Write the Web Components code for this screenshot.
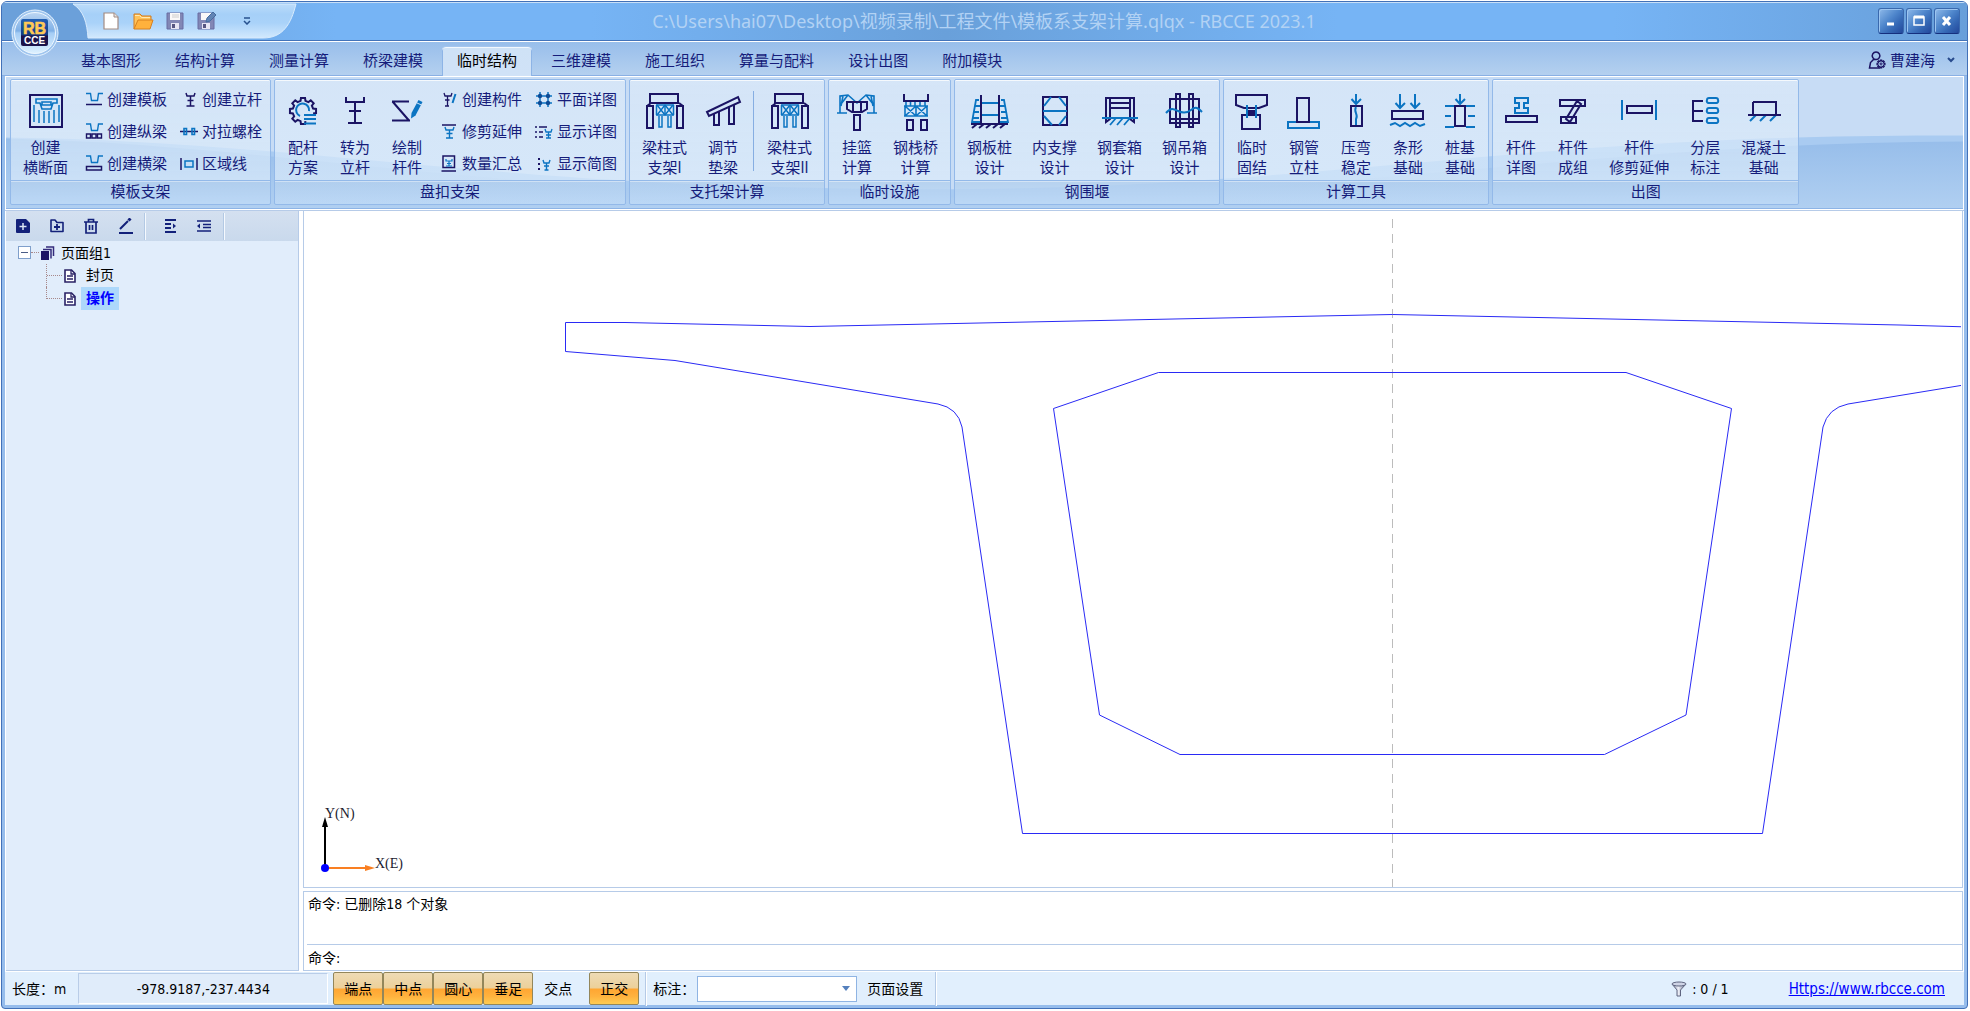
<!DOCTYPE html>
<html lang="zh-CN">
<head>
<meta charset="utf-8">
<title>RBCCE 2023.1</title>
<style>
html,body{margin:0;height:100%;background:#fff}
body{font-family:"DejaVu Sans Condensed","Noto Sans","Noto Sans CJK SC",sans-serif;font-size:14px;color:#000;overflow:hidden}
</style>
</head>
<body>
<rb-window></rb-window>
<script>
const D='#1b1464',B='#0b74c2';
function gear(cx,cy,ro,ri,n,from,to,close){
  const pts=[],step=360/n;
  for(let i=0;i<n;i++){
    for(const [o,r] of [[-.30,ri],[-.20,ro],[.20,ro],[.30,ri]]){
      const a=from+(i+o)*step;
      if(a>to)continue;
      const t=a*Math.PI/180;
      pts.push((cx+r*Math.cos(t)).toFixed(2)+' '+(cy+r*Math.sin(t)).toFixed(2));
    }
  }
  return 'M'+pts.join('L')+(close?'z':'');
}
const d=(p,w=2)=>`<path d="${p}" fill="none" stroke="${D}" stroke-width="${w}"/>`;
const b=(p,w=2)=>`<path d="${p}" fill="none" stroke="${B}" stroke-width="${w}"/>`;
const U='M1 2.5h4.5l1 7h6l1-7H18';
const pier=d('M5 3h28v9H5zM2 15h6v22H2zM32 15h6v22h-6zM2 15l4-3M38 15l-4-3')+b('M11 14h18M11 24h18M11.500 14v10M20 14v10M28.500 14v10',1.5)+b('M12 14l8 10M20 14l-8 10M20 14l8 10M28 14l-8 10M14 25v11h3V25M23 25v11h3V25',1.5);
const ICON={
 section:[40,d('M4 4h32v32H4z')+b('M10 8h21v4h-4l-2 6H16l-2-6h-4zM16 11h9v3h-9z',1.6)+b('M8 14v17M13 19v13M18 20v12M23 20v12M28 19v13M33 14v17',1.5)],
 gear:[40,d(gear(20,20,13.2,10.4,8,90,385),2)+b('M17 25a6.500 6.500 0 1 1 9-5')+b('M21 24h12M21 28h12M21 32.500h12')],
 pole:[40,d('M11 6v5h18V6M20 11v21M14 20h12M13 32h14')],
 draw:[40,d('M5 10.500h17M5.500 10.500L22 29.500M5 29.500h18')+`<path d="M31.500 9l4 2-7 13.500-4.500 3 .5-5.500z" fill="${B}"/><path d="M30 12l4.500 2" stroke="#cfe2f7" stroke-width="1"/>`],
 pier:[40,pier],
 pad:[40,d('M4 21L35 6l2 5L6 25zM11 23v11h5V21M26 15v18h5V13')],
 basket:[40,b('M3 22V5l8-1 9 8 9-8 8 1v17M11 4L4 13M29 4l7 9M20 12L11 4M0 22h10M30 22h10M6 5l-2 10M34 5l2 10',1.6)+d('M10 11h20v7l-5 3H15l-5-3zM16 11v9M24 11v9')+d('M17 24h6v15h-6z')],
 trestle:[40,d('M8 3v7h24V3M11 29h6v10h-6zM25 29h6v10h-6z')+b('M8 15h24M8 25h24M9 15v10M20 15v10M31 15v10M9 15l11 10M20 15L9 25M20 15l11 10M31 15L20 25M10 11v4M14.500 11v4M19 11v4M24 11v4M29 11v4',1.6)],
 sheet:[40,b('M10 12h20M10 24h20M9 9H6L2 31h8M31 9h3l4 22h-8M5 15h5M4 21h5M3 27h6M30 15h5M31 21h5M31 27h6',1.8)+d('M11 4v29M29 4v29M1 33h37M7 33l-5 4M14 33l-5 4M21 33l-5 4M28 33l-5 4M35 33l-5 4',2)],
 brace:[40,d('M8 6h24v28H8z')+b('M8 20h24M16 6L9 15M24 6l7 9M9 25l8 9M31 25l-7 9')],
 jacket:[40,d('M6 7h28M10 12h20',2)+d('M6 6v25l4-3V7M34 6v25l-4-3V7M10 17h20M10 7v10M30 7v10',2)+b('M2 27h36M16 27l-6 7M23 27l-6 7M30 27l-6 7',1.8)],
 hoist:[40,d('M5 8h29v24H5zM11 3h4v33h-4zM24 3h4v33h-4zM5 28h29',2)+b('M1 22c5-6 8-4 12-2s8 3 13-1 7-2 11 2')],
 fix:[40,d('M4 4h31v10l-8 3H12l-8-3zM10 24h18v14H10zM14 20h10')+b('M15 14v13M24 14v13')+`<path d="M16 20h7v4h-7z" fill="${D}"/>`],
 tube:[40,b('M4 31h31v6H4z')+d('M13 7h12v24H13z')],
 bend:[40,d('M15 15h11v20H15z')+b('M20 3v10M15.500 8l4.500 5 5-5M20 16c-3 5 3 8 0 12v6')],
 strip:[40,d('M4 20h31v8H4z')+b('M12 3v14M7.500 12l4.500 5 5-5M27 3v14M22.500 12l4.500 5 5-5M2 34l5-2 5 3 5-3 5 3 5-3 5 3 5-2')],
 pile:[40,d('M15 15h10v20H15z')+b('M20 3v10M15.500 8l4.500 5 5-5M5 15h9M26 15h9M5 25h6M28 25h7M5 36h9M26 36h9')],
 detail:[40,b('M14 7h13v5h-4v5h4v5H14v-5h4v-5h-4z')+d('M5 25h31v6H5z')],
 bundle:[40,d('M7 9h25v6H7zM8 26h15v6H8zM24 10l4 3-11 18-4-3z')],
 trim:[40,b('M3 9v20M37 9v20')+d('M8 15h25v7H8z')],
 layer:[40,d('M18 10H8v20h10M8 20h10')+b('M24 7h7a2 2 0 0 1 2 2 2 2 0 0 1-2 3h-7a2 2 0 0 1-2-3 2 2 0 0 1 2-2zM24 17h7a2 2 0 0 1 2 2 2 2 0 0 1-2 3h-7a2 2 0 0 1-2-3 2 2 0 0 1 2-2zM24 27h7a2 2 0 0 1 2 2 2 2 0 0 1-2 3h-7a2 2 0 0 1-2-3 2 2 0 0 1 2-2z')],
 base:[40,b('M12 24l-6 6M22 24l-6 6M32 24l-6 6')+d('M9 11h23v13M9 11v13M4 24h33')],
 mTpl:[18,b(U,1.4)+d('M1 13.500h16',1.5)],
 mLong:[18,b('M1 1h4.500l1 6.500h6l1-6.500H18',1.4)+d('M1.500 11h4v4h-4zM7 11h4v4H7zM12.500 11h4v4h-4z',1.4)],
 mCross:[18,b('M1 1h4.500l1 6.500h6l1-6.500H18',1.4)+d('M1.500 11.500h15v3.500h-15z',1.5)],
 mPole:[18,d('M6 2l1 3h7l1-3M10.500 5v10M7.500 9.500h6M6.500 15h8',1.5)],
 mBolt:[18,d('M0 8.500h18',1.4)+b('M4 5.500h2.500v6H4zM12 5.500h2.500v6H12z',1.6)],
 mArea:[18,d('M1 3v12M17 3v12',1.5)+b('M5 6h8v6H5z',1.5)],
 mPart:[18,d('M4 2l1 3h6l1-3M7.500 5v10M5 9h4.500M5 15h4',1.3)+b('M15.500 3l-3 9',2)],
 mTrim:[18,d('M2 2h14',1.5)+b('M5 4l1 3h7l1-3M9.500 7v8M6.500 10.500h6M6 15h7',1.4)],
 mSum:[18,d('M3 1h11.500v11.500H3zM1.500 16h14.500',1.5)+b('M6 4v2h6V4M9 6v5M7 8.500h4M6 11h6',1.2)],
 mPlan:[18,b('M5 1v15M13 1v15M1 5h16M1 12h16',1.5)+[[5,5],[13,5],[5,12],[13,12]].map(p=>`<circle cx="${p[0]}" cy="${p[1]}" r="2.200" fill="#0d4a94"/>`).join('')],
 mShowD:[18,d('M0 4h2M0 9h2M0 14h2M4 4h8M4 9h4M4 14h4',1.6)+b('M10 6l1 3h5l1-3M13.500 9v6M11 12h5M11 15h5',1.3)],
 mShowS:[18,d('M3 4h2M3 9h2M3 14h2',1.8)+b('M8 5l1 3h5l1-3M11.500 8v7M9 11h5M9.500 15h4',1.4)],
 user:[18,d('M12 17H1.500l1-5.500 3-3h3M8 1a3.800 3.800 0 1 0 .1 0z',1.5)+d(gear(13,13,4,3,8,0,360,1),1.2)+d('M13 12a1 1 0 1 0 .1 0z',1)],
 newdoc:[20,'<path d="M3 2h10l4 4v12H3z" fill="#fff" stroke="#a38b82" stroke-width="1.2"/><path d="M13 2v4h4" fill="#e5e5e5" stroke="#a38b82"/>'],
 open:[22,'<path d="M2 19V4h6l2 2h9v4" fill="#ffc35a" stroke="#d27b1c"/><path d="M2 19l4-9h15l-3 9z" fill="#ffb13c" stroke="#d8801f"/><path d="M3 5.500h4.500l2 2H18" fill="none" stroke="#ffe9b4"/>'],
 save:[20,'<path d="M2 2h16v16H2z" fill="#8287b5" stroke="#686da2"/><path d="M5 2h10v7H5z" fill="#faf8f8"/><path d="M7 4h7M7 6h7" stroke="#ccc"/><path d="M6 12h8v6H6z" fill="#e6e5f4"/><path d="M7 13h3v4H7z" fill="#565581"/>'],
 savepen:[20,'<path d="M2 2h16v16H2z" fill="#8287b5" stroke="#686da2"/><path d="M5 2h10v7H5z" fill="#faf8f8"/><path d="M6 12h8v6H6z" fill="#e6e5f4"/><path d="M7 13h3v4H7z" fill="#565581"/><path d="M10 11l1-4 6-6 3 3-6 6z" fill="#6284b5" stroke="#456da0"/>'],
 more:[8,'<path d="M1 1h6" stroke="#27518e" stroke-width="1.5"/><path d="M1 4l3 3 3-3" fill="none" stroke="#27518e" stroke-width="1.5"/>'],
 caret:[8,'<path d="M1 2l3 3 3-3" fill="none" stroke="#274a8c" stroke-width="2"/>'],
 tAdd:[16,'<path d="M2 1h9l4 4v9a1 1 0 0 1-1 1H2a1 1 0 0 1-1-1V2a1 1 0 0 1 1-1z" fill="#13217a"/><path d="M8 5v7M4.500 8.500h7" stroke="#dbe6f4" stroke-width="1.5"/>'],
 tFolder:[16,'<path d="M2 2h4l2 2.500h6v9H2z" fill="none" stroke="#13217a" stroke-width="1.600" stroke-linejoin="round"/><path d="M8 6v6M5 9h6" stroke="#13217a" stroke-width="1.800"/>'],
 tDel:[16,'<path d="M1 4h14M5.500 4V1.500h5V4M3 4v11h10V4M6.500 7v5M9.500 7v5" fill="none" stroke="#13217a" stroke-width="1.700"/>'],
 tEdit:[16,'<path d="M2 15h14M3 11l8-8" fill="none" stroke="#13217a" stroke-width="2"/><path d="M11.500 2.500l2-2" stroke="#13217a" stroke-width="3"/>'],
 tIn:[16,'<path d="M3 2h11M3 6h6M3 10h6M3 14h11" stroke="#13217a" stroke-width="1.800"/><path d="M11 5.500l3 2.500-3 2.500z" fill="#13217a"/>'],
 tOut:[16,'<path d="M1 3h14M7 6.500h8M7 9.500h8M1 13h14" stroke="#13217a" stroke-width="1.600"/><path d="M4 5.500L1 8l3 2.500z" fill="#13217a"/>'],
 stack:[16,'<path d="M2 6h8v9H2z" fill="#1b1464"/><path d="M4 4.500h8v9M7 2h7.500v9" fill="none" stroke="#352c7c" stroke-width="1.500"/>'],
 page:[14,'<path d="M2 1h6.500L12 4.500V13H2z" fill="#fff" stroke="#2a2266" stroke-width="1.600"/><path d="M8 1v4h4M4 7h6M4 10h6" fill="none" stroke="#2a2266" stroke-width="1.300"/>'],
 funnel:[16,'<defs><linearGradient id="f"><stop stop-color="#7f86a3"/><stop offset=".45" stop-color="#eef0f8"/><stop offset="1" stop-color="#676e8e"/></linearGradient></defs><path d="M1 3l5 6v6h3.500V9L15 3z" fill="url(#f)" stroke="#5f6580"/><ellipse cx="8" cy="3" rx="7" ry="2" fill="#cfd4e6" stroke="#5f6580"/>'],
};
function define(name,css,html){
  customElements.define(name,class extends HTMLElement{
    connectedCallback(){
      if(this.shadowRoot)return;
      this.attachShadow({mode:'open'});
      this.shadowRoot.innerHTML='<style>*{box-sizing:border-box}button{font:inherit;color:inherit;background:none;border:0;padding:0;margin:0}'+css+'</style>'+(typeof html==='function'?html(this):html);
    }
  });
}
define('rb-icon',':host{display:block;flex:none}svg{display:block}',el=>{
  const [s,body]=ICON[el.getAttribute('name')];
  return `<svg width="${s}" height="${s}" viewBox="0 0 ${s} ${s}" aria-hidden="true">${body}</svg>`;
});
define('rb-tool',`:host{display:block}
button{display:flex;flex-direction:column;align-items:center;min-width:52px;padding:11px 10px 0;height:100px;line-height:20px;white-space:nowrap}
rb-icon{margin:0 -5px 7px}`,
el=>`<button><rb-icon name="${el.getAttribute('icon')}"></rb-icon>${el.getAttribute('label').split('|').map(t=>`<span>${t}</span>`).join('')}</button>`);
define('rb-mini',`:host{display:block}
button{display:flex;align-items:center;gap:4px;width:95px;height:32px;padding-left:6px;white-space:nowrap;line-height:20px}`,
el=>`<button><rb-icon name="${el.getAttribute('icon')}"></rb-icon><slot></slot></button>`);
define('rb-minis',':host{display:grid;grid-template-columns:95px 94px;grid-auto-rows:32px;padding-top:4px;margin-left:1px}','<slot></slot>');
define('rb-sep',':host{display:block;width:1px;height:80px;margin:11px 3px 0 4px;background:#86aee2}','');
define('rb-group',`:host{display:block;flex:none;border:1px solid #93b9e9;border-radius:2px;background:linear-gradient(rgba(222,235,249,.6),rgba(222,238,252,.65));box-shadow:inset 0 1px rgba(255,255,255,.75)}
.tools{display:flex;height:100px;padding:0 2px}
.title{height:24px;border-top:1px solid #93b9e9;box-shadow:inset 0 1px rgba(255,255,255,.4);line-height:22px;text-align:center;background:linear-gradient(rgba(140,180,226,.42),rgba(150,192,240,.32))}`,
el=>`<div class="tools"><slot></slot></div><div class="title">${el.getAttribute('label')}</div>`);
define('rb-quickbar',`:host{display:flex;align-items:center;position:relative;width:226px;height:36px;padding-left:29px}
svg.bg{position:absolute;inset:0;width:100%;height:100%}
.b{position:relative;display:flex}
.row{display:flex;align-items:center;gap:11px}
.m{margin-left:16px}`,
`<svg class="bg" viewBox="0 0 226 36" preserveAspectRatio="none"><defs><linearGradient id="q" x2="0" y2="1"><stop stop-color="#bcdcfa"/><stop offset=".3" stop-color="#a6d0f8"/><stop offset=".55" stop-color="#a9d2f9"/><stop offset="1" stop-color="#d2e9fd"/></linearGradient></defs><path d="M1 1h223c-5 20-13 34-33 34H16C15 20 12 8 1 1z" fill="url(#q)" stroke="#d9ebfc"/></svg>
<div class="row"><button class="b" aria-label="新建"><rb-icon name="newdoc"></rb-icon></button><button class="b" aria-label="打开"><rb-icon name="open"></rb-icon></button><button class="b" aria-label="保存"><rb-icon name="save"></rb-icon></button><button class="b" aria-label="另存为"><rb-icon name="savepen"></rb-icon></button><button class="b m" aria-label="更多"><rb-icon name="more"></rb-icon></button></div>`);
define('rb-winbtn',`:host{display:block}
button{display:flex;width:26px;height:26px;border-radius:3px;background:linear-gradient(135deg,#8fbaea,#4d85cb 45%,#3467b4 70%,#23489b);border:1px solid #3a69ae;border-bottom-color:#142f7e;box-shadow:inset 1px 1px #9cc5f0;align-items:center;justify-content:center}`,
el=>`<button aria-label="${el.getAttribute('kind')}"><svg width="14" height="14" viewBox="0 0 14 14" fill="none" stroke="#fff">${{min:'<path d="M3 10h7" stroke-width="3"/>',max:'<path d="M2 3h10v8H2z" stroke-width="1.500"/><path d="M2 3h10" stroke-width="3"/>',close:'<path d="M3 3l7 8M10 3L3 11" stroke-width="3"/>'}[el.getAttribute('kind')]}</svg></button>`);
define('rb-titlebar',`:host{display:flex;align-items:center;height:39px;background:linear-gradient(90deg,#6ba0da 0,#6ba0da 4%,#76b4f5 17%,#76b4f5 30%,#69a0da 48%,#76b4f5 68%,#76b4f5 82%,#689fda 100%);border-bottom:1px solid #4373b9;box-shadow:inset 0 1px #c8dff7}
rb-quickbar{margin-left:70px;flex:none}
h1{flex:1;margin:0;font:18px/38px "Noto Sans","Noto Sans CJK SC",sans-serif;color:#b2d2f4;text-align:center;white-space:nowrap}
.w{display:flex;gap:2px;padding-right:7px;margin-left:208px}`,
`<rb-quickbar></rb-quickbar><h1>C:\\Users\\hai07\\Desktop\\视频录制\\工程文件\\模板系支架计算.qlqx - RBCCE 2023.1</h1><div class="w"><rb-winbtn kind="min"></rb-winbtn><rb-winbtn kind="max"></rb-winbtn><rb-winbtn kind="close"></rb-winbtn></div>`);
define('rb-orb',`:host{position:absolute;left:9px;top:7px;display:block}button{display:block}svg{display:block}text{font-family:"Liberation Sans",sans-serif;font-weight:bold}`,
`<button aria-label="RBCCE"><svg width="48" height="48" viewBox="0 0 48 48"><defs><linearGradient id="o" x2="0" y2="1"><stop stop-color="#bcd6f3"/><stop offset=".45" stop-color="#7fb0e6"/><stop offset=".5" stop-color="#a5cdf5"/><stop offset="1" stop-color="#ddf1ff"/></linearGradient><linearGradient id="p" x2="0" y2="1"><stop stop-color="#2260b4"/><stop offset=".6" stop-color="#123a80"/><stop offset=".62" stop-color="#1b1249"/></linearGradient></defs><circle cx="24" cy="24" r="23" fill="#9fc5ee" stroke="#e4f1fd"/><circle cx="24" cy="24" r="20.500" fill="url(#o)" stroke="#eef7ff"/><rect x="10" y="10" width="27" height="27" rx="2" fill="url(#p)"/><text x="12" y="25" font-size="16" fill="#ffca55" stroke="#ffca55" stroke-width=".6">RB</text><text x="13" y="35" font-size="10" fill="#fff">CCE</text></svg></button>`);
const TABS=['基本图形','结构计算','测量计算','桥梁建模','临时结构','三维建模','施工组织','算量与配料','设计出图','附加模块'];
define('rb-tabs',`:host{display:flex;height:35px;padding:4px 12px 0 64px;background:linear-gradient(#98beeb,#b4d0ef);border-top:1px solid #fff;border-bottom:1px solid #8ab0e4;font-size:15px;color:#151c7a}
nav{display:flex;gap:4px}
.t{height:30px;padding:1px 15px 0;line-height:29px;white-space:nowrap}
.t[aria-selected=true]{color:#000;padding-top:0;box-shadow:inset 0 1px #f2f8fe,inset 1px 0 #8db4e6,inset -1px 0 #8db4e6;border-radius:4px 4px 0 0;background:linear-gradient(#cfe2f6,#d0e2f7);border-top:1px solid #a5c6ee}
.u{margin-left:auto;display:flex;align-items:center;height:27px}.u rb-icon:last-child{margin-left:12px}.u span{margin-left:4px}`,
`<nav role="tablist">${TABS.map(t=>`<button class="t" role="tab" aria-selected="${t==='临时结构'}">${t}</button>`).join('')}</nav><button class="u"><rb-icon name="user"></rb-icon><span>曹建海</span><rb-icon name="caret"></rb-icon></button>`);
const GROUPS=[
 ['模板支架',[['section','创建|横断面']],[['mTpl','创建模板'],['mPole','创建立杆'],['mLong','创建纵梁'],['mBolt','对拉螺栓'],['mCross','创建横梁'],['mArea','区域线']]],
 ['盘扣支架',[['gear','配杆|方案'],['pole','转为|立杆'],['draw','绘制|杆件']],[['mPart','创建构件'],['mPlan','平面详图'],['mTrim','修剪延伸'],['mShowD','显示详图'],['mSum','数量汇总'],['mShowS','显示简图']]],
 ['支托架计算',[['pier','梁柱式|支架I'],['pad','调节|垫梁'],null,['pier','梁柱式|支架II']]],
 ['临时设施',[['basket','挂篮|计算'],['trestle','钢栈桥|计算']]],
 ['钢围堰',[['sheet','钢板桩|设计'],['brace','内支撑|设计'],['jacket','钢套箱|设计'],['hoist','钢吊箱|设计']]],
 ['计算工具',[['fix','临时|固结'],['tube','钢管|立柱'],['bend','压弯|稳定'],['strip','条形|基础'],['pile','桩基|基础']]],
 ['出图',[['detail','杆件|详图'],['bundle','杆件|成组'],['trim','杆件|修剪延伸'],['layer','分层|标注'],['base','混凝土|基础']]],
];
define('rb-ribbon',`:host{display:block;position:relative;margin:0 1px;height:133px;background:#c7dcf5;border:0 solid #8db4e6;border-width:0 0 1px;box-shadow:inset 0 1px #fff;font-size:15px;color:#151c7a;overflow:hidden}
svg.w{position:absolute;inset:0;width:100%;height:100%}
.r{position:relative;display:flex;gap:3px;padding:3px 4px 0}`,
`<svg class="w" viewBox="0 0 1957 133" preserveAspectRatio="none"><defs><linearGradient id="w" x2="0" y2="1"><stop stop-color="#96bdea"/><stop offset="1" stop-color="#b0cff1"/></linearGradient></defs><path d="M0 62C300 66 480 112 900 114S1500 58 1957 60V133H0z" fill="#a9cbf1"/><path d="M0 63C280 70 460 118 900 122S1560 68 1957 66V133H0z" fill="url(#w)"/></svg>
<div class="r">${GROUPS.map(([l,t,m])=>`<rb-group label="${l}">${t.map(x=>x?`<rb-tool icon="${x[0]}" label="${x[1]}"></rb-tool>`:'<rb-sep></rb-sep>').join('')}${m?`<rb-minis>${m.map(x=>`<rb-mini icon="${x[0]}">${x[1]}</rb-mini>`).join('')}</rb-minis>`:''}</rb-group>`).join('')}</div>`);
define('rb-tree',`:host{display:flex;flex-direction:column;background:#e1edfb;border:1px solid #b6cbe8;border-left:0;border-top:0;width:293px;flex:none}
.bar{display:flex;align-items:center;height:30px;background:linear-gradient(#d4e0f0,#c9d9ec)}
.bar button{width:34px;height:26px;display:flex;align-items:center;justify-content:center}
.bar i{width:2px;height:27px;background:#f5f9fe;border-left:1px solid #b3c9e4}
.bar i:nth-of-type(1){margin:0 7px 0 2px}.bar i:nth-of-type(2){margin-left:2px}
ul{list-style:none;margin:0;padding:0}
.n{display:flex;align-items:center;height:23px;line-height:20px}
.root{padding-left:12px}
.box{width:13px;height:13px;border:1px solid #7f9fcb;background:#fff;display:flex;align-items:center;justify-content:center;padding:0}
.box::after{content:"";width:7px;height:1px;background:#4a5c86}
.h{width:8px;border-top:1px dotted #a8898b}
.root rb-icon{margin-right:6px}
.kids{margin-left:40px}
.kids .n::before{content:"";width:16px;height:23px;border-left:1px dotted #a8898b;background:repeating-linear-gradient(90deg,#a8898b 0 1px,transparent 1px 2px) 0 11px/16px 1px no-repeat}
.kids li:last-child .n::before{height:12px;align-self:flex-start}
.kids span{padding:0 5px;margin-left:4px;line-height:23px}
.sel{background:#add8fb;color:#00f;font-weight:bold}`,
`<div class="bar"><button aria-label="新建页"><rb-icon name="tAdd"></rb-icon></button><button aria-label="新建组"><rb-icon name="tFolder"></rb-icon></button><button aria-label="删除"><rb-icon name="tDel"></rb-icon></button><button aria-label="编辑"><rb-icon name="tEdit"></rb-icon></button><i></i><button aria-label="展开"><rb-icon name="tIn"></rb-icon></button><button aria-label="折叠"><rb-icon name="tOut"></rb-icon></button><i></i></div>
<ul><li><div class="n root"><button class="box" aria-label="折叠节点"></button><div class="h"></div><rb-icon name="stack"></rb-icon><span>页面组1</span></div>
<ul class="kids"><li><div class="n"><rb-icon name="page"></rb-icon><span>封页</span></div></li><li><div class="n"><rb-icon name="page"></rb-icon><span class="sel">操作</span></div></li></ul></li></ul>`);
define('rb-canvas',`:host{display:block;background:#fff;overflow:hidden;flex:1;min-height:0;border:1px solid #b6cbe8;border-width:0 1px 1px}
svg{display:block}text{font:14px "Liberation Serif",serif;fill:#1c1c30}`,
`<svg width="1657" height="677" viewBox="304 211 1657 677" fill="none" stroke="#2a2af5" stroke-width="1"><path d="M1392.500 219V888" stroke="#bcbcbc" stroke-dasharray="9 6"/>
<path d="M1970 327L1900 325L1392.500 314.500L810 326.500L625 322.500H565.500V351.500L675 360.500L938 404Q958 408 962 427L1022.500 833.500H1762.500L1823 427Q1828 408 1848 404L1970 384"/>
<path d="M1158.500 372.500H1626L1731.500 408.500L1686 715L1604.500 754.500H1180L1099.500 715L1053.500 408.500z"/>
<path d="M325 868V824" stroke="#000" stroke-width="2"/><path d="M322 827l3-10 3 10z" fill="#000" stroke="none"/><path d="M325 868h42" stroke="#f97f22" stroke-width="2"/><path d="M365 865l10 3-10 3z" fill="#f97f22" stroke="none"/><circle cx="325" cy="868" r="4" fill="#00f" stroke="none"/><g stroke="none"><text x="325" y="818">Y(N)</text><text x="375" y="868">X(E)</text></g></svg>`);
define('rb-command',`:host{display:block;flex:none;margin-top:3px;background:#fff;border:1px solid #b6cbe8;line-height:20px;box-shadow:0 -1px #fff}
.log{height:53px;border-bottom:1px solid #b6cbe8;margin-left:3px;padding:2px 0 0 1px}
.in{display:flex;height:25px;align-items:center;padding-left:4px}
input{flex:1;border:0;outline:0;background:none;font:inherit;padding:0 4px}`,
`<div class="log">命令: 已删除18 个对象</div><div class="in"><label for="c">命令:</label><input id="c"></div>`);
define('rb-status',`:host{display:flex;height:34px;flex:none;align-items:center;background:#e1effd;line-height:20px;white-space:nowrap;padding-left:7px;border-top:1px solid #fff}
.xy{width:250px;height:31px;margin-left:12px;line-height:31px;text-align:center;border:1px solid #fff;border-color:#b9cde8 #fff #fff #b9cde8;background:#e0ecfa}
.k{display:flex;margin-left:5px}
.k button{width:50px;height:33px;border-radius:2px;line-height:32px}
.k [aria-pressed=true]{border:1px solid #93865a;background:linear-gradient(#eedbb5,#ecd09a 48%,#ffa632 52%,#ffb23e 75%,#ffcb52)}
.k .o{margin-left:6px}
i{width:2px;height:34px;margin:0 6px;background:#fff;border-left:1px solid #b5cae6}
.cb{position:relative;display:flex;margin-left:2px}
select{width:160px;height:26px;border:1px solid #8fb4e3;background:#fff;appearance:none;border-radius:0}
.cb svg{position:absolute;right:7px;top:10px;pointer-events:none}
.p{margin:0 6px 0 10px}
.f{margin-left:auto;display:flex;align-items:center;gap:5px}
a{color:#00f;font-size:15px;margin:0 19px 0 60px}`,
`<span>长度：m</span><output class="xy">-978.9187,-237.4434</output>
<div class="k"><button aria-pressed="true">端点</button><button aria-pressed="true">中点</button><button aria-pressed="true">圆心</button><button aria-pressed="true">垂足</button><button aria-pressed="false">交点</button><button class="o" aria-pressed="true">正交</button></div>
<i></i><label for="s">标注：</label><span class="cb"><select id="s"><option></option></select><svg width="8" height="6"><path d="M0 0h8L4 5z" fill="#5580bd"/></svg></span>
<button class="p">页面设置</button><i></i>
<span class="f"><rb-icon name="funnel"></rb-icon><span>: 0 / 1</span></span><a href="https://www.rbcce.com">Https://www.rbcce.com</a>`);
define('rb-window',`:host{display:flex;flex-direction:column;position:relative;box-sizing:border-box;height:calc(100vh - 3px);margin:1px 2px 0 1px;border:1px solid #4271b8;border-radius:6px 6px 4px 4px;background:#96bdec;overflow:hidden;padding-bottom:3px}
.c{display:flex;flex-direction:column;flex:1;min-height:0;margin:0 3px;background:#fff}
.m{display:flex;flex:1;min-height:0;padding:0 1px;border-top:1px solid #b6cbe8;margin-top:1px;gap:4px}
.v{display:flex;flex-direction:column;flex:1;min-width:0}
`,
`<rb-titlebar></rb-titlebar><rb-tabs></rb-tabs><div class="c"><rb-ribbon></rb-ribbon><div class="m"><rb-tree></rb-tree><div class="v"><rb-canvas></rb-canvas><rb-command></rb-command></div></div><rb-status></rb-status></div><rb-orb></rb-orb>`);
</script>
</body>
</html>
